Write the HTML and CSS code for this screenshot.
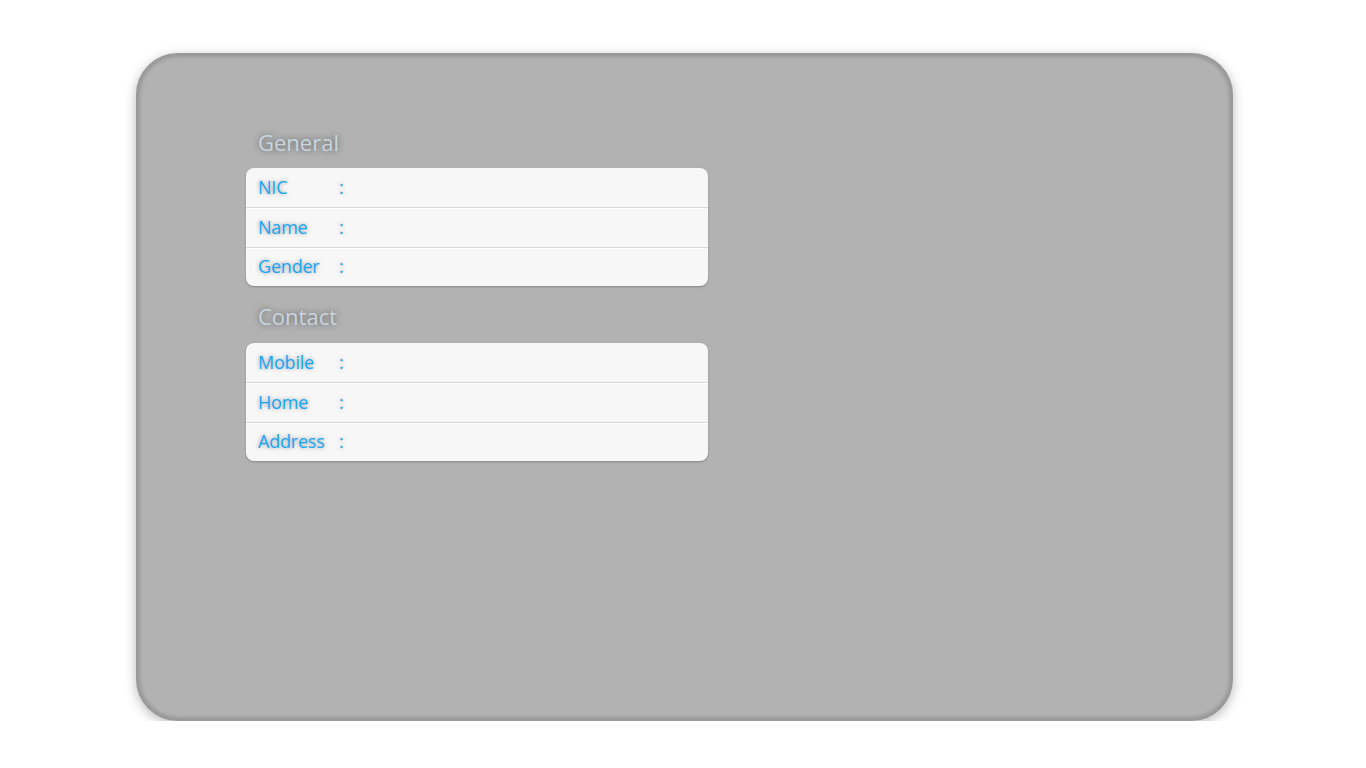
FILE: index.html
```html
<!DOCTYPE html>
<html>
<head>
<meta charset="utf-8">
<link rel="stylesheet" href="styles.css">
</head>
<body>
<div class="card">
  <section class="group">
    <h2 class="heading">General</h2>
    <div class="table">
      <div class="row"><span class="label">NIC</span><span class="colon">:</span></div>
      <div class="row"><span class="label">Name</span><span class="colon">:</span></div>
      <div class="row"><span class="label">Gender</span><span class="colon">:</span></div>
    </div>
  </section>
  <section class="group">
    <h2 class="heading">Contact</h2>
    <div class="table">
      <div class="row"><span class="label">Mobile</span><span class="colon">:</span></div>
      <div class="row"><span class="label">Home</span><span class="colon">:</span></div>
      <div class="row"><span class="label">Address</span><span class="colon">:</span></div>
    </div>
  </section>
</div>
</body>
</html>
```
FILE: styles.css
```css
html, body {
  margin: 0;
  padding: 0;
  background: #ffffff;
}
body {
  font-family: "Open Sans", "Liberation Sans", sans-serif;
  padding: 53px 0 0 136px;
}
.card {
  box-sizing: border-box;
  width: 1097px;
  height: 668px;
  background: #b2b2b2;
  border: 2px solid #999999;
  border-radius: 42px;
  box-shadow: 0 3px 12px rgba(0, 0, 0, 0.28), inset 0 0 5px rgba(0, 0, 0, 0.3);
  padding: 67px 0 0 108px;
  display: flex;
  flex-direction: column;
  gap: 10px;
}
.group {
  width: 462px;
}
.heading {
  margin: 0 0 6px 12px;
  height: 40px;
  line-height: 40px;
  font-size: 22px;
  font-weight: 400;
  color: #c8d5de;
  text-shadow: 0 0 6px rgba(0, 0, 0, 0.5);
  letter-spacing: 0;
}
.group + .group .heading {
  margin-bottom: 7px;
}
.table {
  background: #f7f7f7;
  border-radius: 8px;
  box-shadow: 0 1px 2px rgba(0, 0, 0, 0.25);
  overflow: hidden;
}
.row {
  height: 39px;
  display: flex;
  align-items: center;
  padding: 0 0 2px 12px;
  box-sizing: border-box;
}
.row + .row {
  border-top: 1px solid #d8d8d8;
  box-shadow: inset 0 1px 0 #ffffff;
  height: 40px;
}
.row:last-child {
  height: 39px;
}
.label {
  width: 81px;
  font-size: 18px;
  color: #18a6f4;
  text-shadow: 0 0 4px rgba(0, 0, 0, 0.4);
  letter-spacing: -0.2px;
}
.colon {
  font-size: 18px;
  color: #18a6f4;
  text-shadow: 0 0 4px rgba(0, 0, 0, 0.4);
}
```
